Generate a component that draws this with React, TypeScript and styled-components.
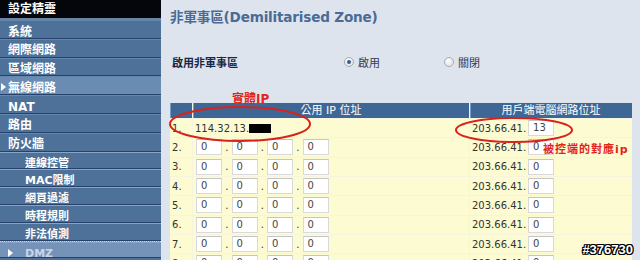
import React from "react";
import styled, { createGlobalStyle } from "styled-components";

const GlobalStyle = createGlobalStyle`
  html, body {
    margin: 0;
    padding: 0;
    width: 640px;
    height: 260px;
    overflow: hidden;
    background: #dde4ee;
  }
`;

const CJK = `"DejaVu Sans", "Noto Sans CJK TC", sans-serif`;

const Page = styled.div`
  display: flex;
  width: 640px;
  height: 260px;
  overflow: hidden;
  font-family: ${CJK};
`;

const Sidebar = styled.nav`
  width: 161px;
  flex: none;
  display: flex;
  flex-direction: column;
  background: #4d7198;
`;

const SideHeader = styled.div`
  height: 18px;
  line-height: 19px;
  padding-left: 8px;
  background: #05050c;
  color: #fff;
  font-size: 12px;
  font-weight: bold;
  border-bottom: 2px solid #6a84a6;
`;

const Item = styled.div<{ $sub?: boolean; $active?: boolean; $dim?: boolean }>`
  position: relative;
  box-sizing: border-box;
  height: ${({ $sub }) => ($sub ? "17.8px" : "18.8px")};
  flex: none;
  padding-top: ${({ $sub }) => ($sub ? "5px" : "5.5px")};
  padding-left: ${({ $sub }) => ($sub ? "25px" : "8px")};
  line-height: 13px;
  font-size: ${({ $sub }) => ($sub ? "11px" : "12px")};
  font-weight: bold;
  color: ${({ $dim }) => ($dim ? "#c9d5e5" : "#ffffff")};
  background: ${({ $active, $dim }) =>
    $dim ? "#7592b8" : $active ? "#6a8bb2" : "#4d7198"};
  border-bottom: 1px solid #26426a;
  box-shadow: ${({ $sub }) =>
    $sub ? "inset 0 1px 0 #8aa4c4" : "inset 0 1px 0 #6487ad"};
  ${({ $dim }) => ($dim ? "border-top: 1px dotted #c8d4e4;" : "")}
  white-space: nowrap;
`;

const Arrow = styled.span<{ $left: number }>`
  position: absolute;
  left: ${({ $left }) => $left}px;
  top: 7px;
  width: 0;
  height: 0;
  border-top: 4px solid transparent;
  border-bottom: 4px solid transparent;
  border-left: 5px solid #ffffff;
`;

const Main = styled.main`
  position: relative;
  flex: 1;
  padding-left: 9px;
  background: #dde4ee;
`;

const Title = styled.h1`
  margin: 8px 0 0 0;
  height: 18px;
  line-height: 18px;
  font-size: 13.6px;
  font-weight: bold;
  color: #4a6b94;
  letter-spacing: -0.2px;
`;

const SettingRow = styled.div`
  display: grid;
  grid-template-columns: 172px 100px 100px;
  align-items: center;
  margin-top: 28px;
  height: 16px;
  padding-left: 2px;
`;

const SettingLabel = styled.span`
  font-size: 11px;
  font-weight: bold;
  color: #17284a;
`;

const RadioWrap = styled.label`
  display: flex;
  align-items: center;
  gap: 4px;
  font-size: 11px;
  color: #2c3d60;
`;

const Radio = styled.span<{ $checked?: boolean }>`
  box-sizing: border-box;
  width: 10px;
  height: 10px;
  border-radius: 50%;
  border: 1px solid #a9adb3;
  background: radial-gradient(circle at 40% 35%, #ffffff, #d6d9de);
  display: flex;
  align-items: center;
  justify-content: center;
  &::after {
    content: "";
    width: 4px;
    height: 4px;
    border-radius: 50%;
    background: ${({ $checked }) => ($checked ? "#3d5b86" : "transparent")};
  }
`;

const Table = styled.div`
  display: grid;
  grid-template-columns: 22px 276px 162px;
  grid-template-rows: 15px;
  grid-auto-rows: 18.33px;
  gap: 1px;
  margin-top: 33px;
  width: 462px;
  background: #f6f4dc;
  font-size: 10px;
  color: #333;
`;

const HeadCell = styled.div`
  background: #3e6795;
  color: #fff;
  font-size: 11px;
  line-height: 15px;
  text-align: center;
  box-shadow: inset 1px 0 0 #7c9ac0;
`;

const Cell = styled.div<{ $pad?: number }>`
  display: flex;
  align-items: center;
  background: #fdfbd1;
  padding-left: ${({ $pad }) => $pad ?? 2}px;
  white-space: nowrap;
`;

const IpBox = styled.span<{ $gap?: number }>`
  box-sizing: border-box;
  width: 26px;
  height: 16px;
  line-height: 14px;
  padding-left: 4px;
  margin-left: ${({ $gap }) => $gap ?? 0}px;
  background: #fff;
  border: 1px solid #d9d9d9;
  border-top-color: #c4c4c4;
  color: #444;
`;

const Dot = styled.span`
  width: 9.5px;
  text-align: center;
`;

const Redacted = styled.span`
  display: inline-block;
  width: 22px;
  height: 9px;
  background: #000;
`;

const Annotations = styled.svg`
  position: absolute;
  left: 0;
  top: 0;
  width: 479px;
  height: 260px;
  pointer-events: none;
`;

const Note = styled.span<{ $x: number; $y: number; $size: number; $spacing: number }>`
  position: absolute;
  left: ${({ $x }) => $x}px;
  top: ${({ $y }) => $y}px;
  font-size: ${({ $size }) => $size}px;
  font-weight: bold;
  color: #e0241c;
  letter-spacing: ${({ $spacing }) => $spacing}px;
  white-space: nowrap;
`;

const Watermark = styled.span`
  position: absolute;
  right: 7px;
  top: 242px;
  font-family: "Liberation Sans", sans-serif;
  font-size: 13px;
  font-weight: bold;
  color: #fff;
  text-shadow: -1px -1px 0 #000, 1px -1px 0 #000, -1px 1px 0 #000,
    1px 1px 0 #000, 0 1px 0 #000, 0 -1px 0 #000, 1px 0 0 #000, -1px 0 0 #000;
`;

const menu = ["系統", "網際網路", "區域網路", "無線網路", "NAT", "路由", "防火牆"];
const subMenu = ["連線控管", "MAC限制", "網頁過濾", "時程規則", "非法偵測"];

const IpInputs = () => (
  <>
    <IpBox>0</IpBox>
    <Dot>.</Dot>
    <IpBox>0</IpBox>
    <Dot>.</Dot>
    <IpBox>0</IpBox>
    <Dot>.</Dot>
    <IpBox>0</IpBox>
  </>
);

export default function App() {
  const rows = [2, 3, 4, 5, 6, 7, 8];
  return (
    <Page>
      <GlobalStyle />
      <Sidebar>
        <SideHeader>設定精靈</SideHeader>
        {menu.map((m) => (
          <Item key={m} $active={m === "無線網路"}>
            {m === "無線網路" && <Arrow $left={1} />}
            {m}
          </Item>
        ))}
        {subMenu.map((m) => (
          <Item key={m} $sub>
            {m}
          </Item>
        ))}
        <Item $sub $dim>
          <Arrow $left={8} />
          DMZ
        </Item>
      </Sidebar>

      <Main>
        <Title>非軍事區(Demilitarised Zone)</Title>
        <SettingRow>
          <SettingLabel>啟用非軍事區</SettingLabel>
          <RadioWrap>
            <Radio $checked />
            啟用
          </RadioWrap>
          <RadioWrap>
            <Radio />
            關閉
          </RadioWrap>
        </SettingRow>

        <Table>
          <HeadCell />
          <HeadCell>公用 IP 位址</HeadCell>
          <HeadCell>用戶端電腦網路位址</HeadCell>

          <Cell>1.</Cell>
          <Cell $pad={2}>
            114.32.13.
            <Redacted />
          </Cell>
          <Cell>
            203.66.41.<IpBox $gap={2}>13</IpBox>
          </Cell>

          {rows.map((n) => (
            <React.Fragment key={n}>
              <Cell>{n}.</Cell>
              <Cell $pad={3}>
                <IpInputs />
              </Cell>
              <Cell>
                203.66.41.<IpBox $gap={2}>0</IpBox>
              </Cell>
            </React.Fragment>
          ))}
        </Table>

        <Annotations viewBox="0 0 479 260">
          <ellipse cx="79" cy="124" rx="70" ry="17" fill="none" stroke="#d8231c" strokeWidth="2" />
          <ellipse cx="353" cy="130" rx="58" ry="12" fill="none" stroke="#d8231c" strokeWidth="2" />
        </Annotations>
        <Note $x={71} $y={89} $size={12} $spacing={0}>實體IP</Note>
        <Note $x={382} $y={140} $size={11} $spacing={1}>被控端的對應ip</Note>
        <Watermark>#376730</Watermark>
      </Main>
    </Page>
  );
}
